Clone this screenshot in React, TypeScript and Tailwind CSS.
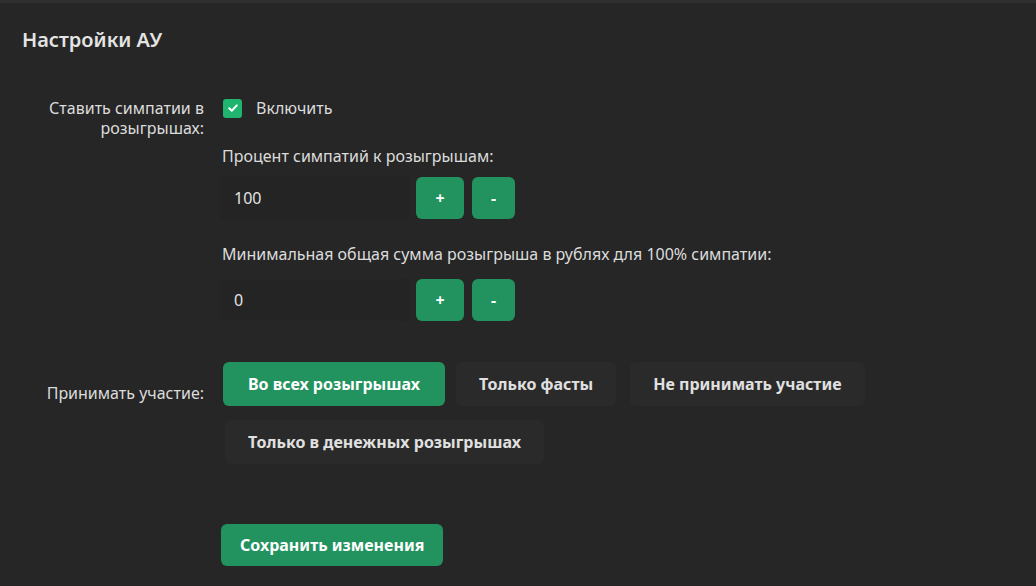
import React, { useState } from "react";

const green = "bg-[#22925f]";

function Stepper({ value }: { value: string }) {
  return (
    <div className="flex items-center gap-[8px]">
      <div className="w-[190px] h-[42px] bg-[#242424] rounded-[4px] flex items-center pl-[14px] text-[16px] text-[#e2e2e2]">
        {value}
      </div>
      <button className={`w-[48px] h-[42px] ${green} rounded-[6px] text-white font-bold text-[16px] ml-[-2px]`}>+</button>
      <button className={`w-[43px] h-[42px] ${green} rounded-[6px] text-white font-bold text-[16px]`}>-</button>
    </div>
  );
}

export default function App() {
  const [mode, setMode] = useState(0);
  const modes = ["Во всех розыгрышах", "Только фасты", "Не принимать участие", "Только в денежных розыгрышах"];
  return (
    <div
      className="w-[1036px] h-[586px] bg-[#262626] text-[#dcdcdc] border-t-[3px] border-[#2f2f2f] overflow-hidden"
      style={{ fontFamily: '"Noto Sans", "Open Sans", sans-serif' }}
    >
      <h1 className="text-[20px] font-semibold text-[#e4e4e4] pl-[22px] pt-[24px] leading-[26px]">Настройки АУ</h1>

      <div className="grid grid-cols-[204px_1fr] gap-x-[19px] mt-[44px]">
        <div className="text-right text-[16px] leading-[20px] pt-[1px]">
          Ставить симпатии в<br />розыгрышах:
        </div>
        <div className="flex flex-col">
          <label className="flex items-center gap-[14px] h-[22px] mt-[0px]">
            <span className="w-[19px] h-[19px] bg-[#1fb56f] rounded-[3px] flex items-center justify-center">
              <svg width="12" height="12" viewBox="0 0 12 12" fill="none">
                <path d="M2.2 6.3 L4.8 8.8 L9.8 3.4" stroke="white" strokeWidth="2" strokeLinecap="round" strokeLinejoin="round" />
              </svg>
            </span>
            <span className="text-[16px]">Включить</span>
          </label>
          <div className="text-[16px] mt-[26px] leading-[22px] ml-[-1px]">Процент симпатий к розыгрышам:</div>
          <div className="mt-[10px] ml-[-3px]">
            <Stepper value="100" />
          </div>
          <div className="text-[16px] mt-[24px] leading-[22px] ml-[-1px]">Минимальная общая сумма розыгрыша в рублях для 100% симпатии:</div>
          <div className="mt-[14px] ml-[-3px]">
            <Stepper value="0" />
          </div>
        </div>

        <div className="text-right text-[16px] leading-[20px] mt-[51px] pt-[11px]">Принимать участие:</div>
        <div className="mt-[41px] flex flex-col gap-[14px]">
          <div className="flex gap-[11px]">
            {modes.slice(0, 3).map((m, i) => (
              <button
                key={m}
                onClick={() => setMode(i)}
                className={`h-[44px] rounded-[6px] font-bold text-[16px] ${
                  mode === i ? `${green} text-white px-[25px]` : "bg-[#2a2a2a] text-[#e0e0e0] px-[23px]"
                } ${i === 2 ? "ml-[3px]" : ""}`}
              >
                {m}
              </button>
            ))}
          </div>
          <div className="flex ml-[2px]">
            <button
              onClick={() => setMode(3)}
              className={`h-[44px] px-[23px] rounded-[6px] font-bold text-[16px] ${
                mode === 3 ? `${green} text-white` : "bg-[#2a2a2a] text-[#e0e0e0]"
              }`}
            >
              {modes[3]}
            </button>
          </div>
        </div>

        <div />
        <div className="mt-[60px] ml-[-2px]">
          <button className={`h-[42px] px-[19px] ${green} rounded-[6px] text-white font-bold text-[16px]`}>
            Сохранить изменения
          </button>
        </div>
      </div>
    </div>
  );
}
